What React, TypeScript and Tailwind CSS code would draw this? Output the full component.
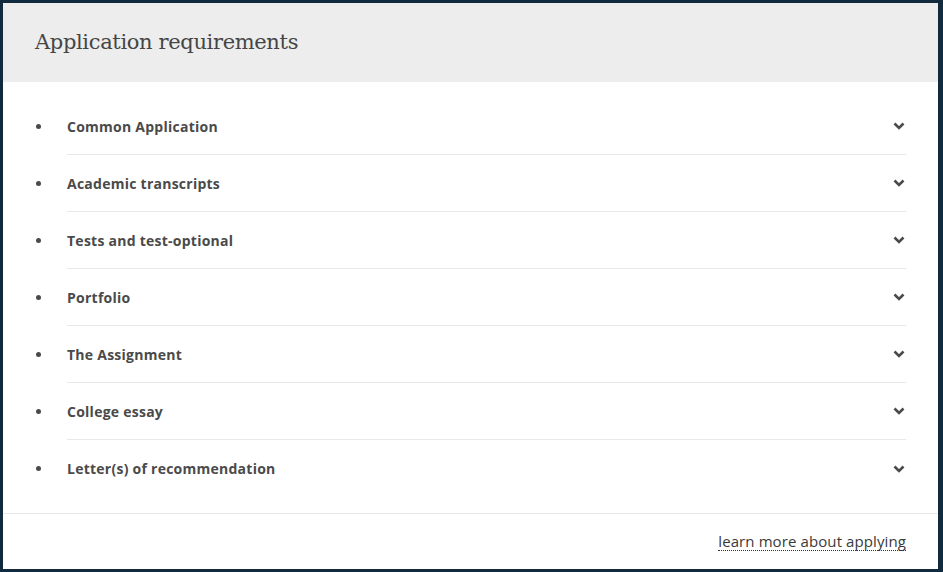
const items = [
  "Common Application",
  "Academic transcripts",
  "Tests and test-optional",
  "Portfolio",
  "The Assignment",
  "College essay",
  "Letter(s) of recommendation",
];

function Chevron() {
  return (
    <svg width="12" height="8" viewBox="0 0 12 8" className="text-[#4a4a4a]">
      <path d="M1.5 1.5 L6 6 L10.5 1.5" fill="none" stroke="currentColor" strokeWidth="2.6" />
    </svg>
  );
}

export default function App() {
  return (
    <div className="h-[572px] w-[943px] bg-[#112a3e] pt-[3px] pb-[3px] pl-[3px] pr-[5px]">
      <div className="flex h-full flex-col bg-white">
        <header className="flex h-[79px] items-center bg-[#ededed] px-8">
          <h2 className="font-['DejaVu_Serif',serif] text-[21px] tracking-[-0.35px] text-[#454545]">
            Application requirements
          </h2>
        </header>

        <ul className="px-[32px] py-4 font-['Open_Sans',sans-serif]">
          {items.map((label, i) => (
            <li key={label} className="flex items-stretch">
              <span className="flex w-[32px] items-center pl-[1px]">
                <span className="h-[5px] w-[5px] rounded-full bg-[#4a4a4a]" />
              </span>
              <div
                className={
                  "flex h-[57px] flex-1 items-center justify-between pr-px " +
                  (i < items.length - 1 ? "border-b border-[#e8e8e8]" : "")
                }
              >
                <span className="text-[14px] font-bold tracking-[0.25px] text-[#4a4a4a]">{label}</span>
                <Chevron />
              </div>
            </li>
          ))}
        </ul>

        <footer className="flex flex-1 items-center justify-end border-t border-[#e8e8e8] px-8">
          <a
            href="#"
            className="border-b border-dotted border-[#333] font-['Open_Sans',sans-serif] text-[15px] leading-[17px] tracking-[0.1px] text-[#3a3a3a]"
          >
            learn more about applying
          </a>
        </footer>
      </div>
    </div>
  );
}
